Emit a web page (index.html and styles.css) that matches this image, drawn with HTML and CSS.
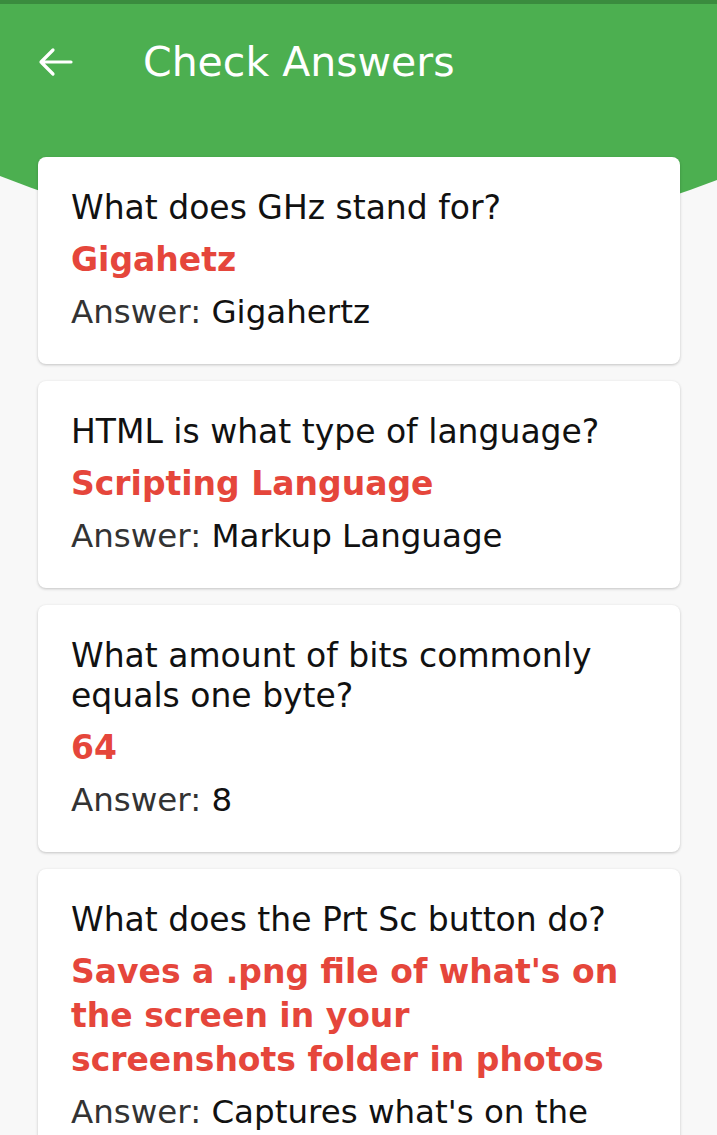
FILE: index.html
```html
<!DOCTYPE html>
<html lang="en">
<head>
  <meta charset="UTF-8">
  <title>Check Answers</title>
  <link rel="stylesheet" href="styles.css">
</head>
<body>

  <header class="appbar">
    <div class="toolbar">
      <button class="back-btn" aria-label="Back">
        <svg width="36" height="32" viewBox="0 0 36 32">
          <path d="M34 16 H4 M16 4 L4 16 L16 28" fill="none" stroke="#fff" stroke-width="3.2" stroke-linecap="round" stroke-linejoin="round"/>
        </svg>
      </button>
      <h1 class="title">Check Answers</h1>
    </div>
  </header>

  <main class="answers">
    <div class="card">
      <p class="question">What does GHz stand for?</p>
      <p class="given">Gigahetz</p>
      <p class="correct"><span class="label">Answer:</span> Gigahertz</p>
    </div>

    <div class="card">
      <p class="question">HTML is what type of language?</p>
      <p class="given">Scripting Language</p>
      <p class="correct"><span class="label">Answer:</span> Markup Language</p>
    </div>

    <div class="card">
      <p class="question">What amount of bits commonly equals one byte?</p>
      <p class="given">64</p>
      <p class="correct"><span class="label">Answer:</span> 8</p>
    </div>

    <div class="card">
      <p class="question">What does the Prt Sc button do?</p>
      <p class="given">Saves a .png file of what's on the screen in your screenshots folder in photos</p>
      <p class="correct"><span class="label">Answer:</span> Captures what's on the screen</p>
    </div>
  </main>

</body>
</html>
```

FILE: styles.css
```css
body {
  margin: 0;
  padding: 0;
  background-color: #f8f8f8;
  font-family: "DejaVu Sans", "Open Sans", sans-serif;
  color: #111;
}

.appbar {
  height: 250px;
  background-color: #4caf50;
  border-top: 4px solid #3a8b3e;
  box-sizing: border-box;
  clip-path: path('M0 0 H717 V180 Q358 318 0 176 Z');
}

.toolbar {
  display: flex;
  align-items: center;
  height: 116px;
  padding-left: 37px;
}

.back-btn {
  background: none;
  border: none;
  padding: 0;
  width: 36px;
  height: 32px;
  cursor: pointer;
}

.back-btn svg {
  display: block;
}

.title {
  margin: 0 0 0 70px;
  color: #fff;
  font-size: 41px;
  font-weight: normal;
}

.answers {
  position: relative;
  margin-top: -93px;
  padding: 0 37px 40px 38px;
  display: flex;
  flex-direction: column;
  gap: 17px;
}

.card {
  background-color: #fff;
  border-radius: 8px;
  padding: 31px 36px 30px 33px;
  box-shadow: 0 1px 3px rgba(0,0,0,0.22);
}

.card p {
  margin: 0;
}

.question {
  font-size: 33px;
  line-height: 40px;
  color: #111;
}

.given {
  margin-top: 10px !important;
  font-size: 33px;
  line-height: 44px;
  font-weight: bold;
  color: #e5463b;
}

.correct {
  margin-top: 8px !important;
  font-size: 32.5px;
  line-height: 44px;
  color: #111;
}

.label {
  color: #333;
}
```
